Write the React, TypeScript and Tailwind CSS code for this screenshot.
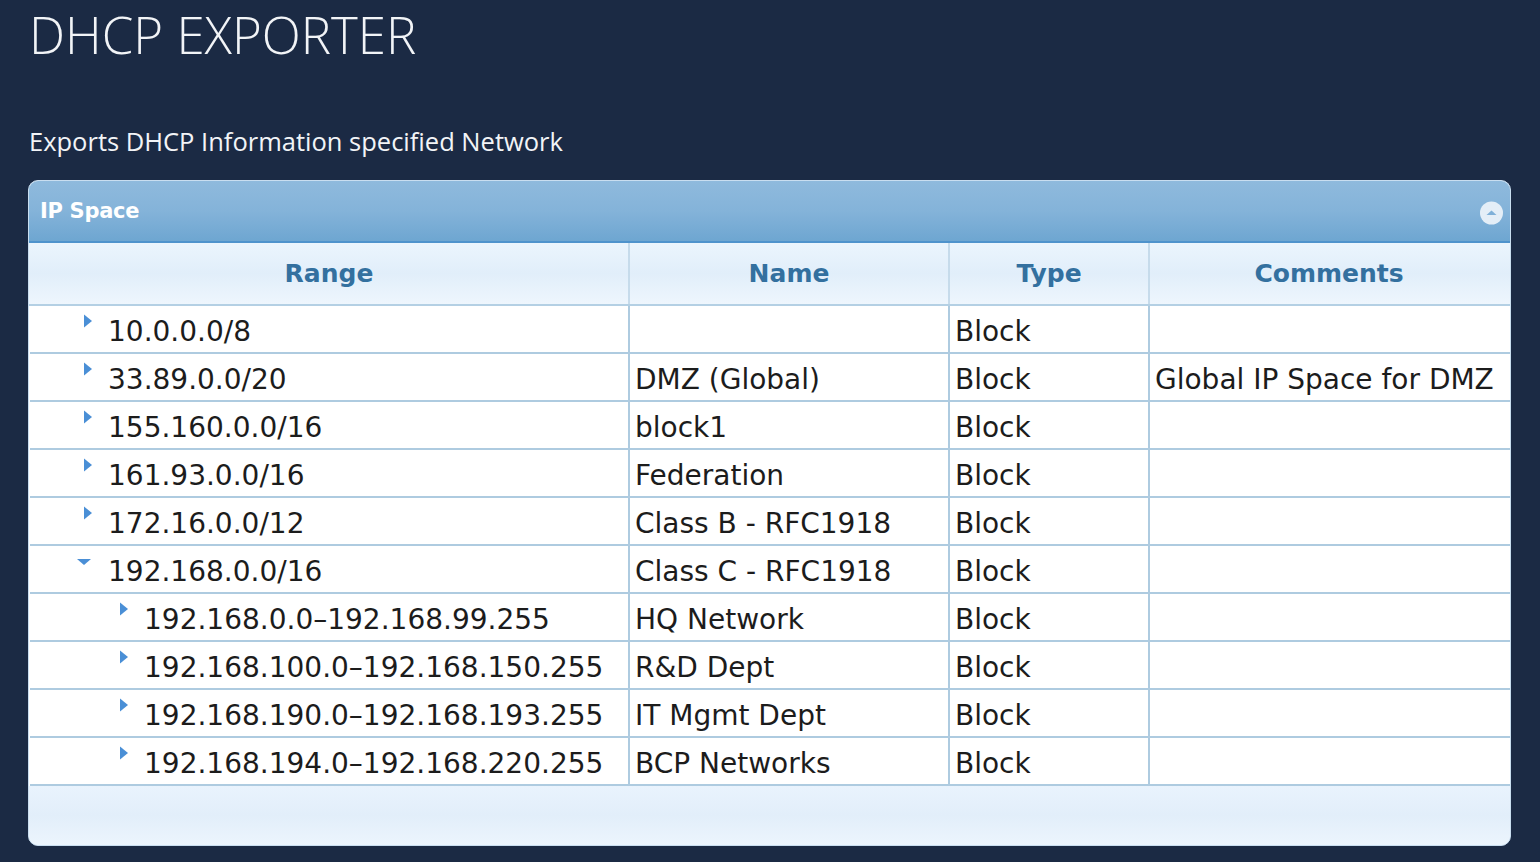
import React from "react";

type Row = {
    range: string;
    name: string;
    type: string;
    comments: string;
    level: number;
    open?: boolean;
};

const rows: Row[] = [
    { range: "10.0.0.0/8", name: "", type: "Block", comments: "", level: 0 },
    { range: "33.89.0.0/20", name: "DMZ (Global)", type: "Block", comments: "Global IP Space for DMZ", level: 0 },
    { range: "155.160.0.0/16", name: "block1", type: "Block", comments: "", level: 0 },
    { range: "161.93.0.0/16", name: "Federation", type: "Block", comments: "", level: 0 },
    { range: "172.16.0.0/12", name: "Class B - RFC1918", type: "Block", comments: "", level: 0 },
    { range: "192.168.0.0/16", name: "Class C - RFC1918", type: "Block", comments: "", level: 0, open: true },
    { range: "192.168.0.0–192.168.99.255", name: "HQ Network", type: "Block", comments: "", level: 1 },
    { range: "192.168.100.0–192.168.150.255", name: "R&D Dept", type: "Block", comments: "", level: 1 },
    { range: "192.168.190.0–192.168.193.255", name: "IT Mgmt Dept", type: "Block", comments: "", level: 1 },
    { range: "192.168.194.0–192.168.220.255", name: "BCP Networks", type: "Block", comments: "", level: 1 },
];

const cols = "grid grid-cols-[598px_320px_200px_360px]";

const Arrow = ({ open }: { open?: boolean }) =>
    open ? (
        <svg width="16" height="8" viewBox="0 0 16 8" className="mt-[12px] -ml-[7px]">
            <path d="M1 1 L15 1 L8 7 Z" fill="#4a8fd6" />
        </svg>
    ) : (
        <svg width="10" height="14" viewBox="0 0 10 14" className="mt-[8px]">
            <path d="M1 0.5 L9 7 L1 13.5 Z" fill="#4a8fd6" />
        </svg>
    );

export default function App() {
    return (
        <div className="min-h-[862px] w-full bg-[#1b2a44] px-[28px] pb-4 overflow-hidden">
            <h1 className="pt-[9px] pl-[1px] text-[51px] leading-none font-light text-[#f2f4f7] font-['Open_Sans',sans-serif]">
                DHCP EXPORTER
            </h1>
            <p className="mt-[69px] pl-[1px] text-[25.5px] leading-none text-[#f2f4f7] font-['Open_Sans',sans-serif]">
                Exports DHCP Information specified Network
            </p>

            <div className="mt-[25px] w-[1483px] rounded-[10px] border border-[#c9def0] overflow-hidden bg-[#e6f1fb] font-['DejaVu_Sans',sans-serif]">
                {/* header bar */}
                <div className="relative h-[62px] bg-gradient-to-b from-[#8fbadd] via-[#84b3d9] to-[#6ea6d1] border-b-2 border-[#4f93cc] flex items-center pl-[11px] pt-[3px]">
                    <span className="text-[21px] font-bold text-white tracking-[-0.3px]">IP Space</span>
                    <svg width="25" height="24" viewBox="0 0 25 24" className="absolute right-[6px] top-[20px]">
                        <circle cx="12.5" cy="12" r="11.5" fill="#e4eef7" />
                        <path d="M7.5 14 L12.5 9.5 L17.5 14 Z" fill="#7fb0d8" />
                    </svg>
                </div>

                {/* column headers */}
                <div className={`${cols} h-[63px] bg-gradient-to-b from-[#ebf5fd] via-[#e1eefa] to-[#eef6fd] border-b-2 border-[#b4d0e4] pl-[1px]`}>
                    {["Range", "Name", "Type", "Comments"].map((h, i) => (
                        <div
                            key={h}
                            className={`flex items-center justify-center pt-[2px] text-[25px] font-bold text-[#33709f] ${i > 0 ? "border-l-2 border-[#c6dbeb]" : ""}`}
                        >
                            {h}
                        </div>
                    ))}
                </div>

                {/* rows */}
                <div className="bg-white pl-[1px]">
                    {rows.map((r, idx) => (
                        <div key={idx} className={`${cols} h-[48px] border-b-2 border-[#aecbe0] text-[28px] text-[#1c1c1c]`}>
                            <div className="flex items-start" style={{ paddingLeft: r.level ? 89 : 53 }}>
                                <div className="w-[25px] flex justify-start">
                                    <Arrow open={r.open} />
                                </div>
                                <span className="mt-[6px] leading-[40px] whitespace-nowrap">{r.range}</span>
                            </div>
                            <div className="border-l-2 border-[#aecbe0] pl-[5px] pt-[6px] leading-[40px] whitespace-nowrap">{r.name}</div>
                            <div className="border-l-2 border-[#aecbe0] pl-[5px] pt-[6px] leading-[40px] whitespace-nowrap">{r.type}</div>
                            <div className="border-l-2 border-[#aecbe0] pl-[5px] pt-[6px] leading-[40px] whitespace-nowrap overflow-hidden">{r.comments}</div>
                        </div>
                    ))}
                </div>

                {/* footer */}
                <div className="h-[59px] bg-gradient-to-b from-[#e9f3fd] via-[#e2eefa] to-[#ecf5fd]" />
            </div>
        </div>
    );
}
